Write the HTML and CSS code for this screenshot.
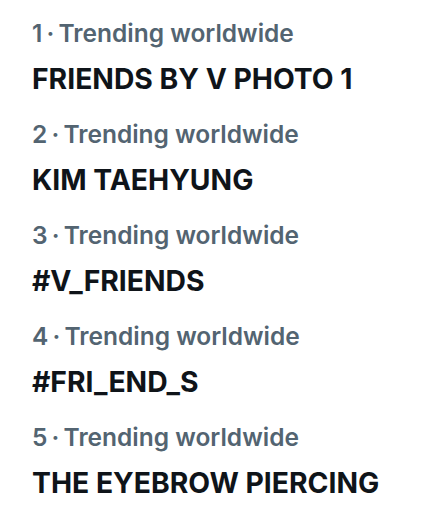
FILE: index.html
```html
<!DOCTYPE html>
<html>

<head>
    <meta charset="UTF-8">
    <title>Trends</title>
    <link rel="stylesheet" href="styles.css">
</head>

<body>
    <ul id="trends">
        <li class="trend">
            <div class="meta">1<span class="sep"> · </span>Trending worldwide</div>
            <div class="name">FRIENDS BY V PHOTO 1</div>
        </li>
        <li class="trend">
            <div class="meta">2<span class="sep"> · </span>Trending worldwide</div>
            <div class="name">KIM TAEHYUNG</div>
        </li>
        <li class="trend">
            <div class="meta">3<span class="sep"> · </span>Trending worldwide</div>
            <div class="name">#V_FRIENDS</div>
        </li>
        <li class="trend">
            <div class="meta">4<span class="sep"> · </span>Trending worldwide</div>
            <div class="name">#FRI_END_S</div>
        </li>
        <li class="trend">
            <div class="meta">5<span class="sep"> · </span>Trending worldwide</div>
            <div class="name">THE EYEBROW PIERCING</div>
        </li>
    </ul>
</body>

</html>
```

FILE: styles.css
```css
/* trending list */
body {
    margin: 0;
    background-color: #fff;
    font-family: Inter, "Noto Sans", sans-serif;
}

#trends {
    list-style: none;
    margin: 0;
    padding: 18px 0 0 32px;
    display: flex;
    flex-direction: column;
    gap: 22px;
}

.trend {
    display: flex;
    flex-direction: column;
    gap: 13px;
}

.meta {
    font-size: 24.5px;
    line-height: 30px;
    font-weight: 600;
    color: #536471;
}

.sep {
    word-spacing: -2px;
}

.name {
    font-size: 28.3px;
    line-height: 36px;
    font-weight: 700;
    color: #0f1419;
}
```
